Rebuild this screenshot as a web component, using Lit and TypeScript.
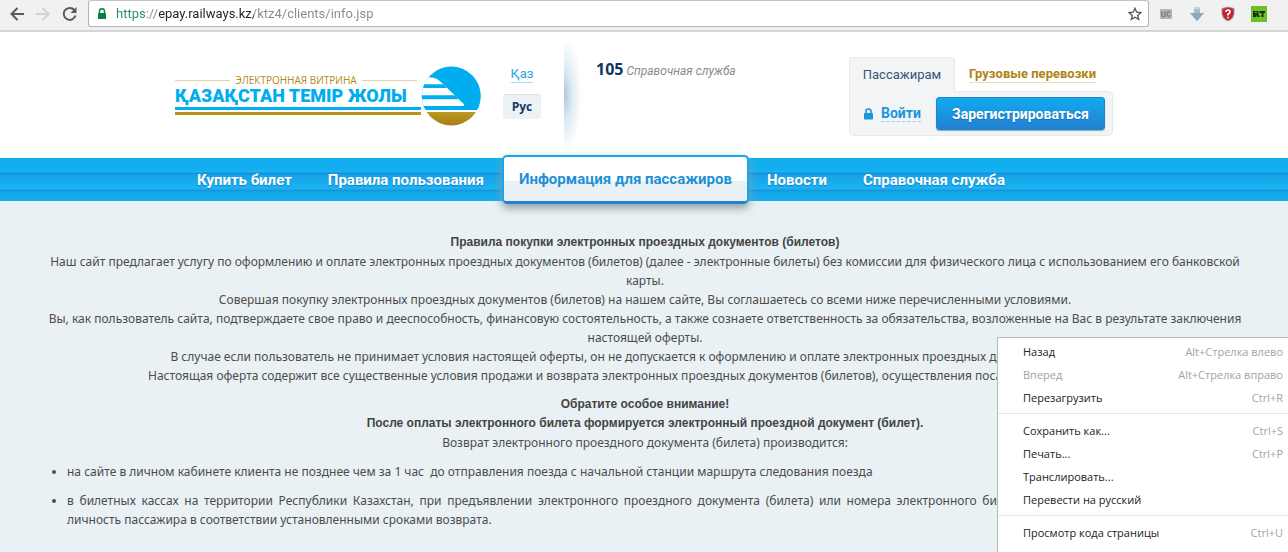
import { LitElement, html, css } from "lit";
import { customElement } from "lit/decorators.js";
import { classMap } from "lit/directives/class-map.js";

@customElement("browser-bar")
class BrowserBar extends LitElement {
  static styles = css`
    :host {
      display: flex;
      align-items: center;
      height: 27px;
      padding-bottom: 3px;
      background: #f1f1f1;
      border-bottom: 2px solid #d6d6d6;
    }
    button {
      display: flex;
      padding: 0;
      border: 0;
      background: none;
    }
    .history {
      display: flex;
      gap: 10px;
      padding: 0 9px 0 9px;
    }
    .address {
      flex: 1;
      display: flex;
      align-items: center;
      gap: 9px;
      box-sizing: border-box;
      height: 27px;
      padding: 0 6px 0 8px;
      border: 1px solid #b3b3b3;
      border-top-color: #c4c4c4;
      border-radius: 3px;
      background: #fff;
    }
    .url {
      flex: 1;
      min-width: 0;
      margin: 0;
      padding: 0;
      border: 0;
      outline: 0;
      font: 13px/18px Roboto, sans-serif;
      background: linear-gradient(
        to right,
        #249163 0 30px,
        #8a8a8a 30px 43px,
        #222 43px 138px,
        #8a8a8a 138px
      );
      -webkit-background-clip: text;
      background-clip: text;
      -webkit-text-fill-color: transparent;
    }
    .extensions {
      display: flex;
      gap: 15px;
      padding: 0 21px 0 9px;
    }
  `;

  render() {
    return html`
      <nav class="history">
        <button aria-label="Назад">
          <svg width="16" height="16" viewBox="0 0 16 16" fill="none" stroke="#5a5a5a" stroke-width="2">
            <path d="M15 8H2.5M8.5 2L2.5 8l6 6" />
          </svg>
        </button>
        <button aria-label="Вперед">
          <svg width="16" height="16" viewBox="0 0 16 16" fill="none" stroke="#d2d2d2" stroke-width="2">
            <path d="M1 8h12.500M7.500 2l6 6-6 6" />
          </svg>
        </button>
        <button aria-label="Перезагрузить">
          <svg width="18" height="16" viewBox="0 0 18 16" fill="none" stroke="#5a5a5a" stroke-width="2">
            <path d="M14.500 9.500A6 6 0 1 1 13.300 4" />
            <path d="M15.500 1v6h-6z" fill="#5a5a5a" stroke="none" />
          </svg>
        </button>
      </nav>
      <div class="address">
        <svg width="10" height="12" viewBox="0 0 10 12">
          <path d="M2.500 5V3.300a2.500 2.500 0 0 1 5 0V5" fill="none" stroke="#0b8043" stroke-width="1.500" />
          <rect x="1" y="5" width="8" height="6" rx="0.600" fill="#0b8043" />
        </svg>
        <input class="url" aria-label="Адрес" value="https://epay.railways.kz/ktz4/clients/info.jsp" />
        <button aria-label="Добавить в закладки">
          <svg width="14" height="14" viewBox="0 0 14 14" fill="none" stroke="#555" stroke-width="1.300">
            <path d="M7 1.300l1.700 3.900 4.200.4-3.200 2.800 1 4.100L7 10.300l-3.700 2.200 1-4.100L1.100 5.600l4.200-.4z" />
          </svg>
        </button>
      </div>
      <div class="extensions">
        <button aria-label="UC">
          <svg width="16" height="16" viewBox="0 0 16 16">
            <rect x="2" y="3" width="12" height="10" rx="1" fill="#b4b4b4" />
            <path d="M4 5v4.500q0 1.500 1.500 1.500T7 9.500V5M12.500 6.200Q9 5 9 8t3.500 1.800" fill="none" stroke="#777" stroke-width="1.200" />
          </svg>
        </button>
        <button aria-label="Загрузки">
          <svg width="16" height="16" viewBox="0 0 16 16">
            <path d="M5 1h6v6h4l-7 8-7-8h4z" fill="#a3bfcd" />
            <path d="M5 1h6v2H5z" fill="#c7d2d7" />
            <path d="M1 7h14l-7 8z" fill="#8babbb" />
          </svg>
        </button>
        <button aria-label="Защита">
          <svg width="16" height="16" viewBox="0 0 16 16">
            <path d="M8 1l6 1.500V8q0 4.500-6 7-6-2.500-6-7V2.500z" fill="#c9202f" stroke="#9d9d9d" />
            <path d="M6 6q0-2 2-2t2 1.700Q10 7 8 8.200v1.300M8 10.800v1.500" fill="none" stroke="#fff" stroke-width="1.700" />
          </svg>
        </button>
        <button aria-label="RT">
          <svg width="16" height="16" viewBox="0 0 16 16">
            <rect width="16" height="16" fill="#6abf2a" />
            <path d="M2 5h5.500v3.500L9 11H6.700L5.500 9v2H2zM8.500 5H14v2h-1.500v4h-2V7h-2z" fill="#17330a" />
            <path d="M4 6.500h1.800" stroke="#6abf2a" />
          </svg>
        </button>
      </div>
    `;
  }
}

@customElement("site-header")
class SiteHeader extends LitElement {
  static styles = css`
    :host {
      display: block;
      background: #fff;
      font-family: Roboto, sans-serif;
    }
    .inner {
      display: flex;
      align-items: flex-start;
      box-sizing: border-box;
      max-width: 938px;
      height: 126px;
      margin: 0 auto;
    }
    .logo {
      display: flex;
      flex: none;
      margin: 34px 22px 0 0;
      text-decoration: none;
    }
    .name {
      width: 246px;
      padding-top: 8px;
    }
    .tagline {
      display: flex;
      align-items: center;
      gap: 5px;
      width: 242px;
      font: 10px/12px "Open Sans", sans-serif;
      color: #b18a1c;
      white-space: nowrap;
    }
    .tagline::before,
    .tagline::after {
      content: "";
      flex: 1;
      height: 1px;
      background: #e5d5a6;
    }
    .title {
      font-size: 18px;
      line-height: 20px;
      font-weight: 900;
      color: #00aeef;
      white-space: nowrap;
    }
    .bars {
      height: 2px;
      margin-top: 1px;
      border-top: 3px solid #00aeef;
      border-bottom: 3px solid #b8941a;
    }
    .languages {
      display: flex;
      flex-direction: column;
      align-items: center;
      gap: 11px;
      flex: none;
      width: 38px;
      margin: 33px 23px 0 0;
      font-size: 13px;
    }
    .languages a {
      line-height: 17px;
      color: #2c9fe0;
      text-decoration: none;
      border-bottom: 1px solid #a9dcf5;
    }
    .current {
      box-sizing: border-box;
      width: 38px;
      border: 0;
      padding: 0;
      border-radius: 3px;
      background: #edf2f4;
      box-shadow: inset 0 1px 1px #dde3e6;
      font: bold 12px/25px "Open Sans", sans-serif;
      color: #123a68;
    }
    .divider {
      align-self: stretch;
      flex: none;
      width: 32px;
      background: radial-gradient(
        ellipse 18px 58px at 0 50%,
        #a9c9da,
        #dcebf3 45%,
        #fff
      );
    }
    .phone {
      flex: 1;
      margin: 27px 0 0;
      font-size: 12px;
      line-height: 20px;
      color: #8b8b8b;
      white-space: nowrap;
    }
    .phone b {
      font: bold 16px/20px "Noto Sans", sans-serif;
      color: #0d3564;
    }
    .account {
      flex: none;
      margin-top: 25px;
      width: 264px;
    }
    .tabs {
      display: flex;
      align-items: center;
      font-size: 13px;
      line-height: 34px;
    }
    .tab {
      position: relative;
      width: 106px;
      margin-bottom: -1px;
      padding: 0;
      border: 1px solid #e6e8ea;
      border-bottom: 0;
      border-radius: 4px 4px 0 0;
      box-sizing: border-box;
      background: #f2f4f6;
      font: inherit;
      color: #33567a;
      text-align: center;
    }
    .cargo {
      margin-left: 14px;
      line-height: 17px;
      font-weight: 700;
      color: #b08412;
      text-decoration: none;
      border-bottom: 1px solid #eddfb8;
    }
    .panel {
      display: flex;
      align-items: center;
      justify-content: space-between;
      box-sizing: border-box;
      height: 45px;
      padding: 0 7px 0 13px;
      border: 1px solid #e6e8ea;
      border-radius: 0 5px 5px 5px;
      background: #f2f4f6;
    }
    .login {
      display: flex;
      align-items: center;
      gap: 7px;
      font-size: 14px;
      line-height: 16px;
      font-weight: 700;
      color: #1a96dc;
      text-decoration: none;
    }
    .login span {
      border-bottom: 1px dashed #8fd0f0;
    }
    .register {
      box-sizing: border-box;
      height: 33px;
      width: 169px;
      padding: 0;
      border: 1px solid #1d84cc;
      border-radius: 3px;
      background: linear-gradient(#12aaee, #2380d2);
      box-shadow: 0 1px 1px #8fa9ba;
      font: bold 14px/20px Roboto, sans-serif;
      color: #fff;
      text-shadow: 0 1px 1px #1b6fb5;
    }
  `;

  render() {
    return html`
      <header class="inner">
        <a class="logo" href="#">
          <div class="name">
            <div class="tagline">ЭЛЕКТРОННАЯ ВИТРИНА</div>
            <div class="title">ҚАЗАҚСТАН ТЕМІР ЖОЛЫ</div>
            <div class="bars"></div>
          </div>
          <svg width="60" height="60" viewBox="0 0 60 60">
            <defs>
              <clipPath id="disc"><circle cx="30.300" cy="30" r="29.500" /></clipPath>
              <linearGradient id="gold" x2="0" y2="1">
                <stop offset="0" stop-color="#bb9b20" />
                <stop offset="1" stop-color="#a87a14" />
              </linearGradient>
            </defs>
            <g clip-path="url(#disc)">
              <path d="M0 0h60v44H0z" fill="#00aeef" />
              <path d="M0 12q11-2 16 1 3 2 6 5l21 20.300q1 1.700-2 1.700H0z" fill="#fff" />
              <path d="M0 18.300h22.300l3.700 3.700H0zM0 29.300h33.700l4 4H0z" fill="#00aeef" />
              <path d="M0 44h60v2H0z" fill="#fff" />
              <path d="M0 46h60v14H0z" fill="url(#gold)" />
            </g>
          </svg>
        </a>
        <div class="languages">
          <a href="#">Қаз</a>
          <button class="current">Рус</button>
        </div>
        <div class="divider"></div>
        <p class="phone"><b>105</b> <i>Справочная служба</i></p>
        <div class="account">
          <div class="tabs">
            <button class="tab">Пассажирам</button>
            <a class="cargo" href="#">Грузовые перевозки</a>
          </div>
          <div class="panel">
            <a class="login" href="#">
              <svg width="11" height="12" viewBox="0 0 11 12">
                <path d="M3 5.500V3.500a2.500 2.500 0 0 1 5 0v2" fill="none" stroke="#1a96dc" stroke-width="1.600" />
                <rect x="1" y="5" width="9" height="6.500" rx="0.800" fill="#1a96dc" />
              </svg>
              <span>Войти</span>
            </a>
            <button class="register">Зарегистрироваться</button>
          </div>
        </div>
      </header>
    `;
  }
}

const sections = [
  { label: "Купить билет" },
  { label: "Правила пользования" },
  { label: "Информация для пассажиров", active: true },
  { label: "Новости" },
  { label: "Справочная служба" },
];

@customElement("site-nav")
class SiteNav extends LitElement {
  static styles = css`
    :host {
      display: block;
      background: linear-gradient(
        #13aef0 0 11px,
        #1bb4f3 14px,
        #1690da 15px 16px,
        #16a2e6 17px,
        #1bb4f3 31px,
        #1796dd 32px 33px,
        #15a6ea 34px,
        #13aef0
      );
    }
    .items {
      display: flex;
      align-items: center;
      max-width: 938px;
      height: 43px;
      margin: 0 auto;
      padding-left: 4px;
      box-sizing: border-box;
    }
    a {
      padding: 0 18px;
      font: bold 15px/20px Roboto, sans-serif;
      color: #fff;
      text-decoration: none;
      white-space: nowrap;
      text-shadow: 0 1px 1px #1a7cc4;
    }
    .active {
      padding: 12px 15px;
      border: 2px solid #12a8ec;
      border-bottom: 3px solid #1f83d2;
      border-radius: 5px;
      background: linear-gradient(#fff 0 24px, #e9f1f4 24px);
      box-shadow: 0 4px 8px #8f9ba3;
      color: #1e90d6;
      text-shadow: none;
    }
  `;

  render() {
    return html`
      <nav class="items">
        ${sections.map(
          (s) => html`<a href="#" class=${classMap({ active: !!s.active })}>${s.label}</a>`
        )}
      </nav>
    `;
  }
}

interface MenuEntry {
  label: string;
  keys?: string;
  disabled?: boolean;
}

const menuGroups: MenuEntry[][] = [
  [
    { label: "Назад", keys: "Alt+Стрелка влево" },
    { label: "Вперед", keys: "Alt+Стрелка вправо", disabled: true },
    { label: "Перезагрузить", keys: "Ctrl+R" },
  ],
  [
    { label: "Сохранить как...", keys: "Ctrl+S" },
    { label: "Печать...", keys: "Ctrl+P" },
    { label: "Транслировать..." },
    { label: "Перевести на русский" },
  ],
  [{ label: "Просмотр кода страницы", keys: "Ctrl+U" }],
];

@customElement("context-menu")
class ContextMenu extends LitElement {
  static styles = css`
    :host {
      display: block;
      box-sizing: border-box;
      padding: 2px 0 8px;
      border: 1px solid #b5b9bb;
      border-right: 0;
      background: #fff;
    }
    .group {
      padding-bottom: 4px;
    }
    .group + .group {
      border-top: 1px solid #e6e6e6;
      padding-top: 5px;
    }
    button {
      display: flex;
      justify-content: space-between;
      width: 100%;
      padding: 0 5px 0 25px;
      border: 0;
      background: none;
      font: 11px/23px "Open Sans", sans-serif;
      color: #222;
      white-space: nowrap;
    }
    button:disabled,
    .keys {
      color: #a3a39c;
    }
  `;

  render() {
    return menuGroups.map(
      (group) => html`
        <div class="group">
          ${group.map(
            (e) => html`<button ?disabled=${!!e.disabled}>
              <span>${e.label}</span><span class="keys">${e.keys ?? ""}</span>
            </button>`
          )}
        </div>
      `
    );
  }
}

@customElement("app-root")
class AppRoot extends LitElement {
  static styles = css`
    :host {
      display: flex;
      flex-direction: column;
      position: relative;
      min-height: 100vh;
      overflow: hidden;
      background: #e9f1f4;
    }
    .content {
      padding: 32px 46px 20px 48px;
      font: 12px/19px "Noto Sans", sans-serif;
      color: #4c4c4c;
    }
    .centered {
      margin: 0 0 10px;
      text-align: center;
    }
    h1,
    h2 {
      margin: 0;
      font: bold 12px/19px "Liberation Sans", sans-serif;
      color: #444;
    }
    ul {
      margin: 0;
      padding: 0 24px 0 19px;
      text-align: justify;
    }
    li {
      margin-bottom: 10px;
    }
    .menu {
      position: absolute;
      top: 337px;
      right: 0;
      width: 291px;
    }
  `;

  render() {
    return html`
      <browser-bar></browser-bar>
      <site-header></site-header>
      <site-nav></site-nav>
      <main class="content">
        <div class="centered">
          <h1>Правила покупки электронных проездных документов (билетов)</h1>
          Наш сайт предлагает услугу по оформлению и оплате электронных проездных документов (билетов)
          (далее - электронные билеты) без комиссии для физического лица с использованием его банковской карты.<br />
          Совершая покупку электронных проездных документов (билетов) на нашем сайте, Вы соглашаетесь со
          всеми ниже перечисленными условиями.<br />
          Вы, как пользователь сайта, подтверждаете свое право и дееспособность, финансовую
          состоятельность, а также сознаете ответственность за обязательства, возложенные на Вас в
          результате заключения настоящей оферты.<br />
          В случае если пользователь не принимает условия настоящей оферты, он не допускается к
          оформлению и оплате электронных проездных документов (билетов).<br />
          Настоящая оферта содержит все существенные условия продажи и возврата электронных проездных
          документов (билетов), осуществления посадки и проезда в поезде.
        </div>
        <div class="centered">
          <h2>Обратите особое внимание!</h2>
          <h2>После оплаты электронного билета формируется электронный проездной документ (билет).</h2>
          Возврат электронного проездного документа (билета) производится:
        </div>
        <ul>
          <li>
            на сайте в личном кабинете клиента не позднее чем за 1 час&nbsp; до отправления поезда с
            начальной станции маршрута следования поезда
          </li>
          <li>
            в билетных кассах на территории Республики Казахстан, при предъявлении электронного
            проездного документа (билета) или номера электронного билета и документа, удостоверяющего
            личность пассажира в соответствии установленными сроками возврата.
          </li>
        </ul>
      </main>
      <context-menu class="menu"></context-menu>
    `;
  }
}
